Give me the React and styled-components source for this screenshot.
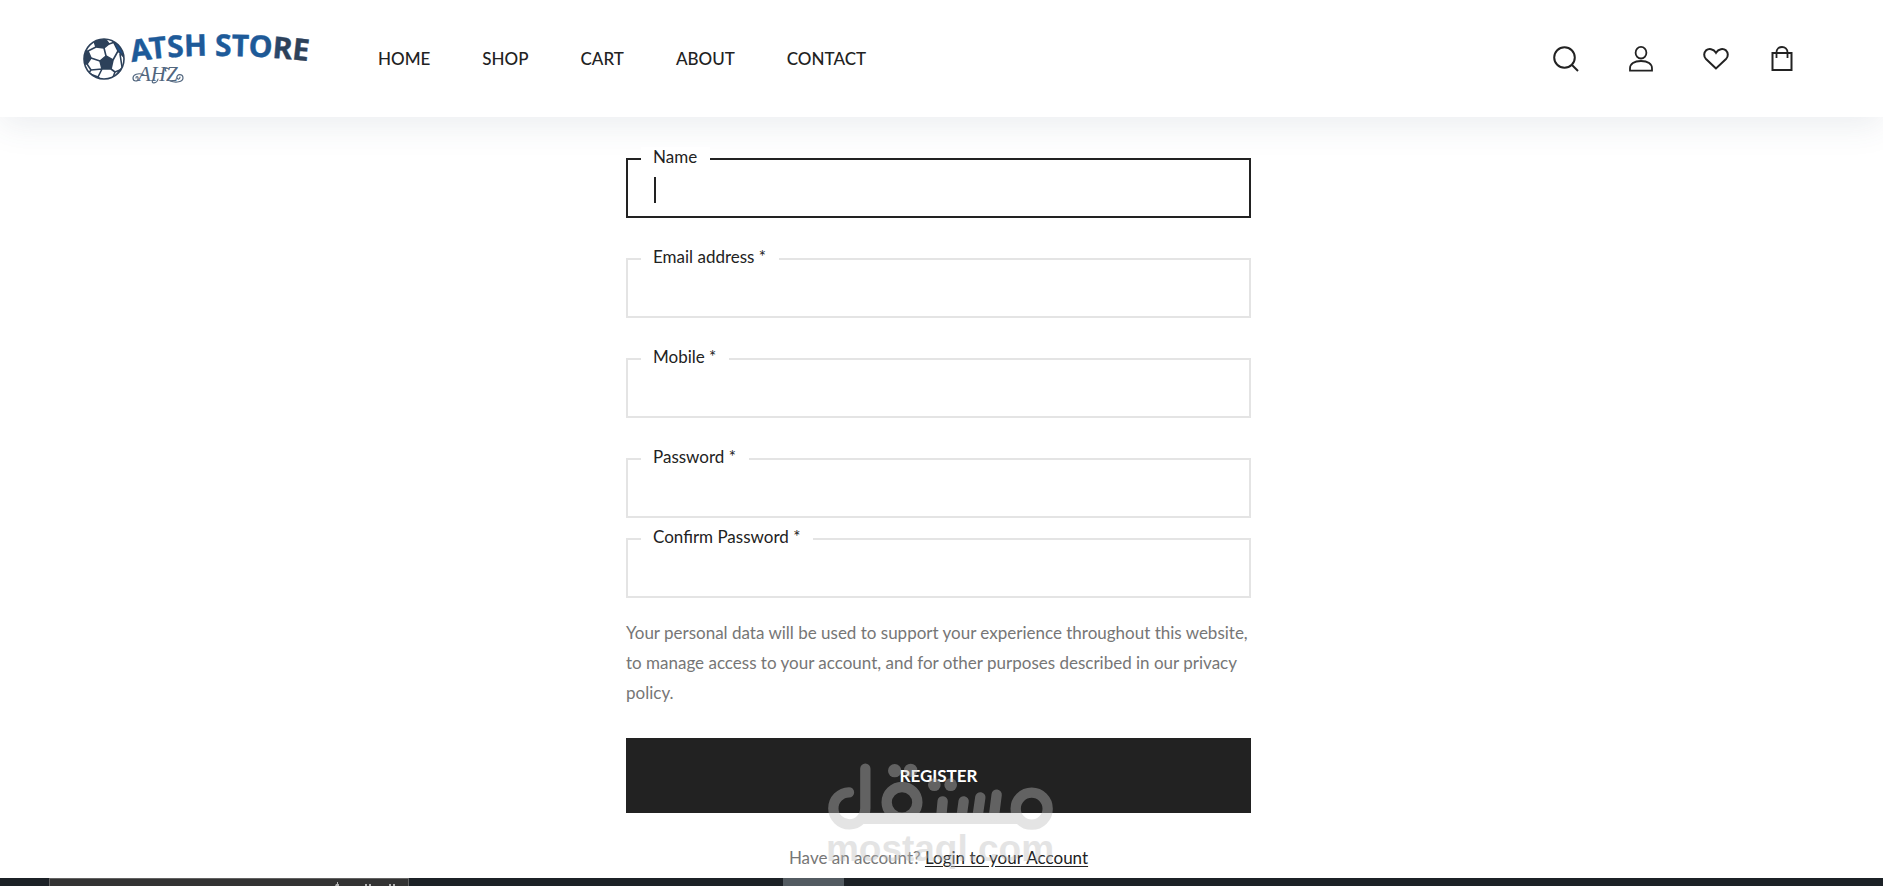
import React, {useState} from 'react';
import styled, {createGlobalStyle} from "styled-components";

const GlobalStyle = createGlobalStyle `
*{
    box-sizing: border-box;
}
body{
    margin: 0;
    background: #ffffff;
    color: #222222;
    font-family: Lato, "Liberation Sans", sans-serif;
    font-size: 17px;
}
`;

const Page = styled.div `
min-height: 100vh;
display: grid;
grid-template-rows: auto 1fr auto;
`;

const Header = styled.header `
display: flex;
align-items: center;
justify-content: space-between;
height: 117px;
padding: 0 90px 0 82px;
background: white;
box-shadow: 0 8px 32px rgba(60, 80, 110, 0.1);
`;

const HeaderLeft = styled.div `
display: flex;
align-items: center;
gap: 56px;
`;

const LogoLink = styled.a `
display: block;
line-height: 0;
`;

const Nav = styled.nav `
display: flex;
gap: 52px;
`;

const NavLink = styled.a `
color: #222222;
font-size: 17px;
font-weight: 500;
line-height: 24px;
text-decoration: none;

&:hover{
    text-decoration: underline;
}
`;

const Tools = styled.div `
display: flex;
align-items: center;
gap: ${props => props.$wide ? "50px" : "42px"};
`;

const ToolButton = styled.button `
display: block;
padding: 0;
border: none;
background: none;
color: #222222;
line-height: 0;
cursor: pointer;
`;

const Main = styled.main `
position: relative;
display: flex;
justify-content: center;
padding: 41px 20px 5px 14px;
`;

const Form = styled.form `
width: 100%;
max-width: 625px;
`;

const Fields = styled.div `
display: grid;
gap: 40px;
`;

const FieldPair = styled.div `
display: grid;
gap: 20px;
`;

const FieldBox = styled.div `
position: relative;

label{
    position: absolute;
    top: -11px;
    left: 15px;
    padding: 0 13px 0 12px;
    background: white;
    line-height: 20px;
}
input{
    display: block;
    width: 100%;
    height: 60px;
    padding: 4px 26px 0;
    border: 2px solid ${props => props.$active ? "#222222" : "#e4e4e4"};
    border-radius: 0;
    background: white;
    outline: none;
    font: inherit;
    caret-color: ${props => props.$active ? "transparent" : "#222222"};
}
`;

const Caret = styled.span `
position: absolute;
top: 19px;
left: 28px;
width: 2px;
height: 26px;
background: #222222;
`;

const Notice = styled.p `
margin: 20px 0 30px;
color: #767676;
line-height: 30px;
`;

const SubmitButton = styled.button `
display: block;
width: 100%;
height: 75px;
border: none;
background: #222222;
color: white;
font: inherit;
font-weight: 700;
cursor: pointer;
`;

const LoginLine = styled.p `
margin: 30px 0 0;
color: #767676;
line-height: 30px;
text-align: center;

a{
    color: #222222;
    text-underline-offset: 2px;
}
`;

const Watermark = styled.div `
position: absolute;
right: 3px;
bottom: 10px;
left: 0;
display: flex;
flex-direction: column;
align-items: center;
color: #bebebe;
opacity: 0.41;
pointer-events: none;
`;

const WatermarkName = styled.span `
font-family: "Liberation Sans", sans-serif;
font-size: 37px;
font-weight: 700;
line-height: 38px;
`;

const Taskbar = styled.footer `
display: flex;
height: 8px;
padding-left: 49px;
background: #1c2126;
overflow: hidden;
`;

const TaskSearch = styled.div `
width: 360px;
margin-right: 374px;
padding-right: 8px;
border: 1px solid #626262;
border-bottom: none;
background: #333333;
line-height: 0;
text-align: right;
`;

const TaskTile = styled.div `
width: 61px;
background: #535b61;
`;

const Logo = () => (
    <svg width="240" height="60" viewBox="82 28 240 60" role="img" aria-label="ATSH STORE AHZ">
        <defs>
            <linearGradient id="ink" gradientUnits="userSpaceOnUse" x1="264" y1="0" x2="282" y2="0">
                <stop offset="0" stopColor="#1e5a99"/>
                <stop offset="1" stopColor="#2d415a"/>
            </linearGradient>
            <clipPath id="ball">
                <circle cx="104" cy="58" r="20"/>
            </clipPath>
            <path id="arch" d="M132 61 Q172 54 222 55 Q272 55 322 62"/>
        </defs>
        <circle cx="104" cy="58" r="20" fill="white"/>
        <g clipPath="url(#ball)" fill="#2d415a" stroke="#2d415a" strokeWidth="1.6" strokeLinejoin="round">
            <path d="M100 60 L106 55 L113 59 L111 68 L102 68 Z"/>
            <path d="M94 40 L104 36 L109 43 L104 47 L96 46 Z"/>
            <path fill="#1f4f86" d="M113 40 L126 46 L125 57 L118 50 Z"/>
            <path d="M82 50 L88 50 L91 57 L87 63 L82 63 Z"/>
            <path d="M120 69 L125 64 L121 76 L116 75 Z"/>
            <path d="M90 73 L98 76 L102 80 L91 79 Z"/>
            <path fill="none" d="M104 47 L106 55 M109 43 L115 41 M118 50 L113 59 M120 53 L122 66 M111 68 L115 71 L120 69 M102 68 L98 76 M87 63 L91 69 L102 68 M91 57 L100 60 M88 50 L96 46 M115 71 L112 79 M91 69 L88 73"/>
        </g>
        <circle cx="104" cy="58" r="20" fill="none" stroke="#2d415a" strokeWidth="1.6"/>
        <text fill="url(#ink)" stroke="url(#ink)" strokeWidth="0.4" strokeLinejoin="round" fontFamily="'Noto Sans', sans-serif" fontWeight="700" fontSize="30">
            <textPath href="#arch">ATSH STORE</textPath>
        </text>
        <text x="138" y="80" fill="#52677f" fontFamily="'Liberation Serif', serif" fontStyle="italic" fontSize="21">AHZ</text>
        <g fill="none" stroke="#52677f" strokeWidth="1.2" strokeLinecap="round">
            <path d="M144 74 C138 71 133 74 133 77 C133 81 139 81 138 77 C138 75 136 75 136 77"/>
            <path d="M153 79 C150 83 157 83 158 78 M169 68 C166 66 164 68 166 70"/>
            <path d="M170 80 C176 82 183 81 183 77 C183 72 176 73 177 77 C178 79 180 78 180 76"/>
        </g>
    </svg>
);

const SearchIcon = () => (
    <svg width="26" height="26" viewBox="0 0 26 26" fill="none" stroke="currentColor" strokeWidth="2">
        <circle cx="11.5" cy="11.5" r="10.3"/>
        <path d="M18.5 18.5 L25 25"/>
    </svg>
);

const UserIcon = () => (
    <svg width="24" height="26" viewBox="0 0 24 26" fill="none" stroke="currentColor" strokeWidth="1.8">
        <ellipse cx="12" cy="6.7" rx="5.4" ry="5.8"/>
        <path d="M1 24.7 V22.5 C1 18 5 15 12 15 C19 15 23 18 23 22.5 V24.7 Z"/>
    </svg>
);

const HeartIcon = () => (
    <svg width="26" height="26" viewBox="0 0 26 26" fill="none" stroke="currentColor" strokeWidth="2">
        <path d="M13 22.4 L3 13 C0.4 10.4 0.8 6.4 3 4.4 C5.8 2.2 10.4 2.6 13 6.8 C15.6 2.6 20.2 2.2 23 4.4 C25.2 6.4 25.6 10.4 23 13 Z"/>
    </svg>
);

const BagIcon = () => (
    <svg width="22" height="26" viewBox="0 0 22 26" fill="none" stroke="currentColor" strokeWidth="2">
        <path d="M1.5 7 H20.5 V24 H1.5 Z"/>
        <path strokeWidth="1.8" d="M5.5 12 V6.5 C5.5 3 8 1 11 1 C14 1 16.5 3 16.5 6.5 V12"/>
    </svg>
);

const WatermarkMark = () => (
    <svg width="226" height="67" viewBox="174 100 678 201" fill="none" stroke="currentColor" strokeWidth="31" strokeLinecap="round" aria-hidden="true">
        <path d="M240 188 A48 48 0 1 0 289 236 V117"/>
        <path strokeLinecap="butt" strokeWidth="34" d="M284 266 H752"/>
        <circle cx="399" cy="218" r="46"/>
        <circle cx="788" cy="237" r="48"/>
        <path d="M521 215 L517 258 M584 215 L578 258 M634 203 L626 258 M683 195 L675 258"/>
        <g fill="currentColor" stroke="none">
            <circle cx="377" cy="123" r="20"/>
            <circle cx="425" cy="122" r="20"/>
            <circle cx="496" cy="165" r="19"/>
            <circle cx="545" cy="165" r="19"/>
        </g>
    </svg>
);

// tops of the letters in the taskbar search box
const SearchHint = () => (
    <svg width="66" height="7" viewBox="0 0 66 7" fill="#b4b4b4" aria-hidden="true">
        <path d="M2 5 H5 V7 H1 Z M3 3 H4 V5 H3 Z M31 5 H33 V7 H31 Z M35 5 H37 V7 H35 Z M55 5 H57 V7 H55 Z M59 5 H61 V7 H59 Z"/>
    </svg>
);

const Field = ({id, label, type = "text", active}) => {
    const [value, setValue] = useState("");
    return (
        <FieldBox $active={active}>
            <input id={id} type={type} value={value} onChange={(e) => setValue(e.target.value)}/>
            <label htmlFor={id}>{label}</label>
            {active && value === "" && <Caret/>}
        </FieldBox>
    )
}

const links = ["HOME", "SHOP", "CART", "ABOUT", "CONTACT"];

const App = () => {
    return (
        <Page>
            <GlobalStyle/>
            <Header>
                <HeaderLeft>
                    <LogoLink href="#"><Logo/></LogoLink>
                    <Nav>
                        {links.map((name) => <NavLink key={name} href="#">{name}</NavLink>)}
                    </Nav>
                </HeaderLeft>
                <Tools>
                    <Tools $wide>
                        <ToolButton type="button" aria-label="Search"><SearchIcon/></ToolButton>
                        <ToolButton type="button" aria-label="Account"><UserIcon/></ToolButton>
                        <ToolButton type="button" aria-label="Wishlist"><HeartIcon/></ToolButton>
                    </Tools>
                    <ToolButton type="button" aria-label="Bag"><BagIcon/></ToolButton>
                </Tools>
            </Header>
            <Main>
                <Form onSubmit={(e) => e.preventDefault()}>
                    <Fields>
                        <Field id="name" label="Name" active/>
                        <Field id="email" label="Email address *" type="email"/>
                        <Field id="mobile" label="Mobile *" type="tel"/>
                        <FieldPair>
                            <Field id="password" label="Password *" type="password"/>
                            <Field id="confirm" label="Confirm Password *" type="password"/>
                        </FieldPair>
                    </Fields>
                    <Notice>Your personal data will be used to support your experience throughout this website, to manage access to your account, and for other purposes described in our privacy policy.</Notice>
                    <SubmitButton type="submit">REGISTER</SubmitButton>
                    <LoginLine>Have an account? <a href="#">Login to your Account</a></LoginLine>
                </Form>
                <Watermark>
                    <WatermarkMark/>
                    <WatermarkName>mostaql.com</WatermarkName>
                </Watermark>
            </Main>
            <Taskbar>
                <TaskSearch><SearchHint/></TaskSearch>
                <TaskTile/>
            </Taskbar>
        </Page>
    )
}

export default App;
